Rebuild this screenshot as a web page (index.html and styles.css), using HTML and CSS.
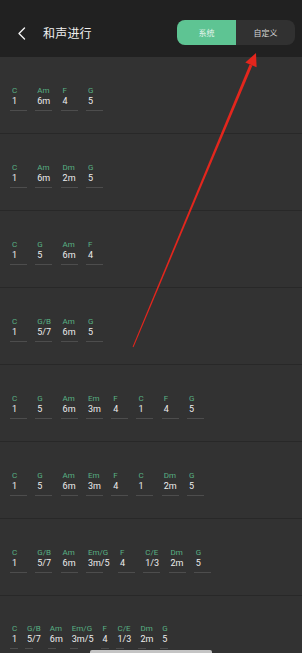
FILE: index.html
```html
<!DOCTYPE html>
<html lang="zh">
<head>
    <meta charset="UTF-8">
    <meta name="viewport" content="width=device-width, initial-scale=1.0">
    <title>和声进行</title>
    <link rel="stylesheet" href="styles.css">
</head>
<body>
    <header class="topbar">
        <svg class="back" width="9" height="13" viewBox="0 0 9 13"><polyline points="7.5,1 2,6.5 7.5,12" fill="none" stroke="#f2f2f2" stroke-width="1.4" stroke-linecap="round" stroke-linejoin="round"/></svg>
        <h1 class="title">和声进行</h1>
        <div class="tabs">
            <span class="tab active">系统</span>
            <span class="tab">自定义</span>
        </div>
    </header>

    <div class="list">
        <div class="row">
            <div class="chord"><span class="name">C</span><span class="deg">1</span></div>
            <div class="chord"><span class="name">Am</span><span class="deg">6m</span></div>
            <div class="chord"><span class="name">F</span><span class="deg">4</span></div>
            <div class="chord"><span class="name">G</span><span class="deg">5</span></div>
        </div>
        <div class="row">
            <div class="chord"><span class="name">C</span><span class="deg">1</span></div>
            <div class="chord"><span class="name">Am</span><span class="deg">6m</span></div>
            <div class="chord"><span class="name">Dm</span><span class="deg">2m</span></div>
            <div class="chord"><span class="name">G</span><span class="deg">5</span></div>
        </div>
        <div class="row">
            <div class="chord"><span class="name">C</span><span class="deg">1</span></div>
            <div class="chord"><span class="name">G</span><span class="deg">5</span></div>
            <div class="chord"><span class="name">Am</span><span class="deg">6m</span></div>
            <div class="chord"><span class="name">F</span><span class="deg">4</span></div>
        </div>
        <div class="row">
            <div class="chord"><span class="name">C</span><span class="deg">1</span></div>
            <div class="chord"><span class="name">G/B</span><span class="deg">5/7</span></div>
            <div class="chord"><span class="name">Am</span><span class="deg">6m</span></div>
            <div class="chord"><span class="name">G</span><span class="deg">5</span></div>
        </div>
        <div class="row">
            <div class="chord"><span class="name">C</span><span class="deg">1</span></div>
            <div class="chord"><span class="name">G</span><span class="deg">5</span></div>
            <div class="chord"><span class="name">Am</span><span class="deg">6m</span></div>
            <div class="chord"><span class="name">Em</span><span class="deg">3m</span></div>
            <div class="chord"><span class="name">F</span><span class="deg">4</span></div>
            <div class="chord"><span class="name">C</span><span class="deg">1</span></div>
            <div class="chord"><span class="name">F</span><span class="deg">4</span></div>
            <div class="chord"><span class="name">G</span><span class="deg">5</span></div>
        </div>
        <div class="row">
            <div class="chord"><span class="name">C</span><span class="deg">1</span></div>
            <div class="chord"><span class="name">G</span><span class="deg">5</span></div>
            <div class="chord"><span class="name">Am</span><span class="deg">6m</span></div>
            <div class="chord"><span class="name">Em</span><span class="deg">3m</span></div>
            <div class="chord"><span class="name">F</span><span class="deg">4</span></div>
            <div class="chord"><span class="name">C</span><span class="deg">1</span></div>
            <div class="chord"><span class="name">Dm</span><span class="deg">2m</span></div>
            <div class="chord"><span class="name">G</span><span class="deg">5</span></div>
        </div>
        <div class="row">
            <div class="chord"><span class="name">C</span><span class="deg">1</span></div>
            <div class="chord"><span class="name">G/B</span><span class="deg">5/7</span></div>
            <div class="chord"><span class="name">Am</span><span class="deg">6m</span></div>
            <div class="chord"><span class="name">Em/G</span><span class="deg">3m/5</span></div>
            <div class="chord"><span class="name">F</span><span class="deg">4</span></div>
            <div class="chord"><span class="name">C/E</span><span class="deg">1/3</span></div>
            <div class="chord"><span class="name">Dm</span><span class="deg">2m</span></div>
            <div class="chord"><span class="name">G</span><span class="deg">5</span></div>
        </div>
        <div class="row compact">
            <div class="chord"><span class="name">C</span><span class="deg">1</span></div>
            <div class="chord"><span class="name">G/B</span><span class="deg">5/7</span></div>
            <div class="chord"><span class="name">Am</span><span class="deg">6m</span></div>
            <div class="chord"><span class="name">Em/G</span><span class="deg">3m/5</span></div>
            <div class="chord"><span class="name">F</span><span class="deg">4</span></div>
            <div class="chord"><span class="name">C/E</span><span class="deg">1/3</span></div>
            <div class="chord"><span class="name">Dm</span><span class="deg">2m</span></div>
            <div class="chord"><span class="name">G</span><span class="deg">5</span></div>
        </div>
    </div>

    <div class="home-bar"></div>

    <!-- red annotation arrow drawn over the screenshot -->
    <svg class="arrow" width="302" height="653" viewBox="0 0 302 653">
        <polygon points="249.6,64.4 252.4,65.6 133.5,347.2 132.6,346.8" fill="#e3261d"/>
        <polygon points="256,53 245.3,62.6 256.6,67.3" fill="#e3261d"/>
    </svg>
</body>
</html>
```

FILE: styles.css
```css
body { margin: 0; width: 302px; height: 653px; overflow: hidden; background-color: #323232; font-family: Roboto, "Noto Sans CJK SC", sans-serif; position: relative; }

.topbar { height: 57px; box-sizing: border-box; padding: 20px 7px 12px 17px; background-color: #212121; display: flex; align-items: center; }
.back { display: block; margin-top: 1px; }
.title { margin: 0 0 0 17px; font-family: "Noto Sans CJK SC", sans-serif; font-size: 12px; font-weight: normal; color: #f0f0f0; letter-spacing: 0.2px; flex: 1; }
.tabs { display: flex; width: 118px; height: 25px; border-radius: 8px; overflow: hidden; background-color: #313131; }
.tab { flex: 1; display: flex; align-items: center; justify-content: center; font-family: "Noto Sans CJK SC", sans-serif; font-size: 8px; color: #d6d6d6; }
.tab.active { background-color: #5ec493; color: #e6f5ed; }

.row { height: 77px; box-sizing: border-box; border-bottom: 1px solid #282828; padding: 29px 10px 0; display: flex; gap: 8.3px; align-items: flex-start; }
.chord { display: flex; flex-direction: column; min-width: 17px; padding-left: 2px; box-sizing: border-box; }
.chord::after { content: ""; display: block; width: 17px; height: 1px; margin: 3px 0 0 -2px; background-color: #4d4d4d; }
.name { font-size: 8px; line-height: 10px; color: #58b184; white-space: nowrap; }
.deg { font-size: 9px; line-height: 11px; color: #ededed; white-space: nowrap; }

.row.compact { gap: 7px; border-bottom: none; padding-top: 28px; }
.row.compact .chord { min-width: 8px; }
.row.compact .chord::after { width: 8px; }

.home-bar { position: absolute; left: 90px; bottom: 0; width: 122px; height: 3px; border-radius: 2px 2px 0 0; background-color: #c4c4c4; }
.arrow { position: absolute; left: 0; top: 0; pointer-events: none; }
```
